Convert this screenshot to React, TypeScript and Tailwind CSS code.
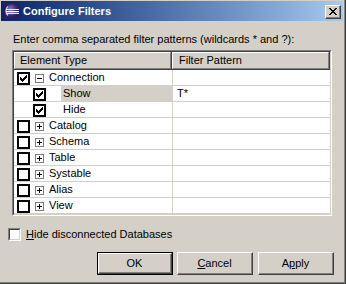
import React from "react";

const CHECK_PIXELS: [number, number][] = [
  [6, 0],
  [5, 1], [6, 1],
  [0, 2], [4, 2], [5, 2], [6, 2],
  [0, 3], [1, 3], [3, 3], [4, 3], [5, 3],
  [0, 4], [1, 4], [2, 4], [3, 4], [4, 4],
  [1, 5], [2, 5], [3, 5],
  [2, 6],
];

function CheckMark() {
  return (
    <svg width="7" height="7" viewBox="0 0 7 7" shapeRendering="crispEdges" className="block">
      {CHECK_PIXELS.map(([x, y], i) => (
        <rect key={i} x={x} y={y} width="1" height="1" fill="#000" />
      ))}
    </svg>
  );
}

function TreeCheck({ checked }: { checked: boolean }) {
  return (
    <div className="w-[13px] h-[13px] border-2 border-black bg-white flex items-center justify-center shrink-0">
      {checked ? <CheckMark /> : null}
    </div>
  );
}

function Expander({ open }: { open: boolean }) {
  return (
    <svg width="9" height="9" viewBox="0 0 9 9" shapeRendering="crispEdges" className="block shrink-0">
      <rect x="0.5" y="0.5" width="8" height="8" fill="#fff" stroke="#808080" strokeWidth="1" />
      <rect x="2" y="4" width="5" height="1" fill="#000" />
      {!open ? <rect x="4" y="2" width="1" height="5" fill="#000" /> : null}
    </svg>
  );
}

type Row = {
  label: string;
  level: 0 | 1;
  checked: boolean;
  open?: boolean;
  selected?: boolean;
  pattern?: string;
};

const ROWS: Row[] = [
  { label: "Connection", level: 0, checked: true, open: true },
  { label: "Show", level: 1, checked: true, selected: true, pattern: "T*" },
  { label: "Hide", level: 1, checked: true },
  { label: "Catalog", level: 0, checked: false, open: false },
  { label: "Schema", level: 0, checked: false, open: false },
  { label: "Table", level: 0, checked: false, open: false },
  { label: "Systable", level: 0, checked: false, open: false },
  { label: "Alias", level: 0, checked: false, open: false },
  { label: "View", level: 0, checked: false, open: false },
];

function EclipseIcon() {
  return (
    <svg width="16" height="16" viewBox="0 0 16 16" className="block shrink-0">
      <defs>
        <radialGradient id="eg" cx="0.4" cy="0.4" r="0.7">
          <stop offset="0" stopColor="#8c7fd0" />
          <stop offset="0.6" stopColor="#3a2d78" />
          <stop offset="1" stopColor="#1b1245" />
        </radialGradient>
      </defs>
      <rect x="0" y="0" width="16" height="16" fill="#2a2060" />
      <circle cx="8" cy="8" r="7" fill="url(#eg)" />
      <path d="M4 3.5 A6 6 0 0 0 4 12.5" stroke="#c9c2f0" strokeWidth="1.3" fill="none" />
      <rect x="2" y="6" width="13" height="1" fill="#e8e6ff" />
      <rect x="2" y="8" width="13" height="1.2" fill="#ffffff" />
      <rect x="2" y="10" width="13" height="1" fill="#e8e6ff" />
    </svg>
  );
}

function Button({
  children,
  isDefault,
  className,
}: {
  children: React.ReactNode;
  isDefault?: boolean;
  className?: string;
}) {
  if (isDefault) {
    return (
      <div className={"w-[76px] h-[23px] border border-black " + (className ?? "")}>
        <div className="w-full h-full border-t border-l border-white border-b border-r border-b-[#404040] border-r-[#404040]">
          <div className="w-full h-full border-b border-r border-b-[#808080] border-r-[#808080] flex items-center justify-center">
            {children}
          </div>
        </div>
      </div>
    );
  }
  return (
    <div
      className={
        "w-[76px] h-[23px] border-t border-l border-white border-b border-r border-b-[#404040] border-r-[#404040] " +
        (className ?? "")
      }
    >
      <div className="w-full h-full border-b border-r border-b-[#808080] border-r-[#808080] flex items-center justify-center">
        {children}
      </div>
    </div>
  );
}

export default function App() {
  return (
    <div
      className="w-[346px] h-[284px] bg-[#404040] pr-[1px] pb-[1px] text-[11px] leading-[13px] text-black"
      style={{ fontFamily: "'Liberation Sans', Arial, sans-serif" }}
    >
      <div className="w-full h-full bg-[#808080] pr-[1px] pb-[1px]">
        <div className="w-full h-full bg-[#d4d0c8] pt-[1px] pl-[1px] pr-[1px] flex flex-col">
          {/* Title bar */}
          <div className="h-[20px] flex items-center pl-[3px] pr-[2px] bg-gradient-to-r from-[#0a246a] to-[#a6caf0]">
            <EclipseIcon />
            <span className="ml-[3px] text-white font-bold text-[11px]">Configure Filters</span>
            <div className="ml-auto w-[16px] h-[14px] mt-[1px] border-t border-l border-white border-b border-r border-b-[#404040] border-r-[#404040] bg-[#d4d0c8]">
              <div className="w-full h-full border-b border-r border-b-[#808080] border-r-[#808080] flex items-center justify-center">
                <svg width="8" height="7" viewBox="0 0 8 7" shapeRendering="crispEdges" className="block">
                  {[0, 1, 2, 3, 4, 5, 6].map((i) => (
                    <React.Fragment key={i}>
                      <rect x={i} y={i} width="2" height="1" fill="#000" />
                      <rect x={6 - i} y={i} width="2" height="1" fill="#000" />
                    </React.Fragment>
                  ))}
                </svg>
              </div>
            </div>
          </div>

          {/* Label */}
          <div className="mt-[12px] pl-[12px] h-[13px] whitespace-nowrap">
            Enter comma separated filter patterns (wildcards * and ?):
          </div>

          {/* Table */}
          <div className="mt-[4px] ml-[11px] w-[320px] h-[166px] border-t border-l border-[#808080] border-b border-r border-b-white border-r-white">
            <div className="w-full h-full border-t border-l border-[#404040] border-b border-r border-b-[#d4d0c8] border-r-[#d4d0c8] bg-white flex flex-col overflow-hidden">
              {/* Header */}
              <div className="flex h-[18px] shrink-0">
                <div className="w-[158px] h-full border-r border-b border-[#404040] bg-[#d4d0c8]">
                  <div className="w-full h-full border-t border-l border-white border-r border-b border-r-[#808080] border-b-[#808080] flex items-center pl-[5px]">
                    Element Type
                  </div>
                </div>
                <div className="w-[158px] h-full border-r border-b border-[#404040] bg-[#d4d0c8]">
                  <div className="w-full h-full border-t border-l border-white border-r border-b border-r-[#808080] border-b-[#808080] flex items-center pl-[6px]">
                    Filter Pattern
                  </div>
                </div>
              </div>
              {/* Rows */}
              {ROWS.map((r) => (
                <div key={r.label} className="flex h-[16px] shrink-0 border-b border-[#d4d0c8]">
                  <div className="w-[158px] h-full flex items-start">
                    {r.level === 0 ? (
                      <>
                        <div className="ml-[3px] mt-[2px]">
                          <TreeCheck checked={r.checked} />
                        </div>
                        <div className="ml-[5px] mt-[4px]">
                          <Expander open={!!r.open} />
                        </div>
                        <div className="ml-[5px] h-full flex items-center">{r.label}</div>
                      </>
                    ) : (
                      <>
                        <div className="ml-[19px] mt-[2px]">
                          <TreeCheck checked={r.checked} />
                        </div>
                        <div
                          className={
                            "ml-[15px] h-full flex-1 flex items-center pl-[2px] " +
                            (r.selected ? "bg-[#d4d0c8]" : "")
                          }
                        >
                          {r.label}
                        </div>
                      </>
                    )}
                  </div>
                  <div className="flex-1 h-full border-l border-[#d4d0c8] flex items-center pl-[4px]">
                    {r.pattern ?? ""}
                  </div>
                </div>
              ))}
            </div>
          </div>

          {/* Hide disconnected */}
          <div className="mt-[12px] ml-[7px] flex items-center h-[13px]">
            <div className="w-[13px] h-[13px] border-t border-l border-[#808080] border-b border-r border-b-white border-r-white">
              <div className="w-full h-full border-t border-l border-[#404040] border-b border-r border-b-[#d4d0c8] border-r-[#d4d0c8] bg-white" />
            </div>
            <span className="ml-[5px]">
              <span className="underline">H</span>ide disconnected Databases
            </span>
          </div>

          {/* Buttons */}
          <div className="mt-[11px] flex justify-end pr-[9px]">
            <Button isDefault>OK</Button>
            <Button className="ml-[4px]">
              <span>
                <span className="underline">C</span>ancel
              </span>
            </Button>
            <Button className="ml-[5px]">
              <span>
                A<span className="underline">p</span>ply
              </span>
            </Button>
          </div>
        </div>
      </div>
    </div>
  );
}
